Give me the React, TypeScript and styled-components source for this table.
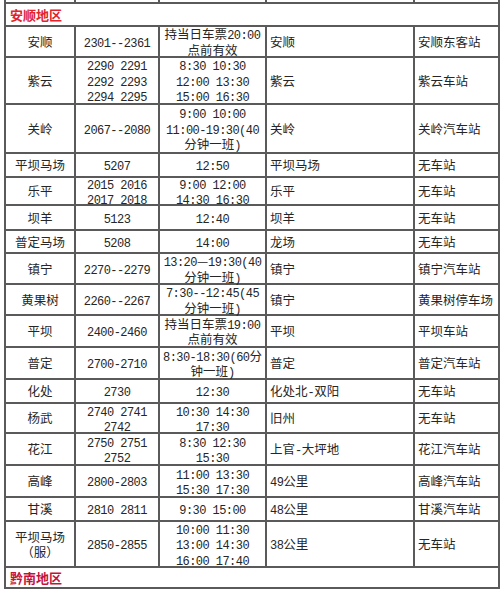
import React from "react";
import styled, { createGlobalStyle } from "styled-components";

type Route = {
  area: string;
  lines: string;
  times: string;
  stop: string;
  station: string;
  h: number;
};

const GlobalStyle = createGlobalStyle`
  html, body {
    margin: 0;
    padding: 0;
    background: #fff;
  }
  body {
    font-family: "Noto Sans CJK SC", sans-serif;
    color: #262626;
  }
`;

const Table = styled.table`
  margin-left: 4px;
  width: 494px;
  table-layout: fixed;
  border-collapse: collapse;
  font-size: 12.5px;
  line-height: 15.5px;
`;

const Row = styled.tr<{ $h: number }>`
  height: ${(p) => p.$h}px;
`;

const Cell = styled.td<{ $left?: boolean }>`
  border: 2px solid #5a5a5a;
  padding: 0 3px;
  text-align: ${(p) => (p.$left ? "left" : "center")};
  vertical-align: middle;
  white-space: nowrap;
  overflow: visible;
`;

// the source rows are tighter than their line spacing, so let text bleed a little
const Lines = styled.div`
  margin: -5px 0;
`;

const StubCell = styled.td`
  border: 2px solid #5a5a5a;
  border-top: none;
  padding: 0;
`;

const SectionCell = styled.td<{ $color: string }>`
  border: 2px solid #5a5a5a;
  padding: 0 4px;
  text-align: left;
  vertical-align: middle;
  font-size: 13px;
  line-height: 15px;
  font-weight: 700;
  color: ${(p) => p.$color};
`;

const Latin = styled.span`
  font-family: "Liberation Mono", monospace;
  font-size: 12px;
  line-height: 10px;
  letter-spacing: -0.55px;
`;

const routes: Route[] = [
  { area: "安顺", lines: "2301--2361", times: "持当日车票20:00\n点前有效", stop: "安顺", station: "安顺东客站", h: 31 },
  { area: "紫云", lines: "2290 2291\n2292 2293\n2294 2295", times: "8:30 10:30\n12:00 13:30\n15:00 16:30", stop: "紫云", station: "紫云车站", h: 47 },
  { area: "关岭", lines: "2067--2080", times: "9:00 10:00\n11:00-19:30(40\n分钟一班)", stop: "关岭", station: "关岭汽车站", h: 49 },
  { area: "平坝马场", lines: "5207", times: "12:50", stop: "平坝马场", station: "无车站", h: 24 },
  { area: "乐平", lines: "2015 2016\n2017 2018", times: "9:00 12:00\n14:30 16:30", stop: "乐平", station: "无车站", h: 28 },
  { area: "坝羊", lines: "5123", times: "12:40", stop: "坝羊", station: "无车站", h: 25 },
  { area: "普定马场", lines: "5208", times: "14:00", stop: "龙场", station: "无车站", h: 23 },
  { area: "镇宁", lines: "2270--2279", times: "13:20—19:30(40\n分钟一班)", stop: "镇宁", station: "镇宁汽车站", h: 31 },
  { area: "黄果树", lines: "2260--2267", times: "7:30--12:45(45\n分钟一班)", stop: "镇宁", station: "黄果树停车场", h: 31 },
  { area: "平坝", lines: "2400-2460", times: "持当日车票19:00\n点前有效", stop: "平坝", station: "平坝车站", h: 32 },
  { area: "普定", lines: "2700-2710", times: "8:30-18:30(60分\n钟一班)", stop: "普定", station: "普定汽车站", h: 32 },
  { area: "化处", lines: "2730", times: "12:30", stop: "化处北-双阳", station: "无车站", h: 24 },
  { area: "杨武", lines: "2740 2741\n2742", times: "10:30 14:30\n17:30", stop: "旧州", station: "无车站", h: 30 },
  { area: "花江", lines: "2750 2751\n2752", times: "8:30 12:30\n15:30", stop: "上官-大坪地", station: "花江汽车站", h: 32 },
  { area: "高峰", lines: "2800-2803", times: "11:00 13:30\n15:30 17:30", stop: "49公里", station: "高峰汽车站", h: 32 },
  { area: "甘溪", lines: "2810 2811", times: "9:30 15:00", stop: "48公里", station: "甘溪汽车站", h: 24 },
  { area: "平坝马场\n（服）", lines: "2850-2855", times: "10:00 11:30\n13:00 14:30\n16:00 17:40", stop: "38公里", station: "无车站", h: 46 },
];

// ascii runs get the narrow mono face, the rest stays CJK
const Text = ({ value }: { value: string }) => (
  <Lines>
    {value.split("\n").map((line, i) => (
      <React.Fragment key={i}>
        {i > 0 && <br />}
        {line.split(/([\x21-\x7e ]+)/).map((part, j) =>
          /^[\x21-\x7e ]+$/.test(part) ? <Latin key={j}>{part}</Latin> : part
        )}
      </React.Fragment>
    ))}
  </Lines>
);

const App = () => (
  <>
    <GlobalStyle />
    <Table>
      <colgroup>
        <col style={{ width: 70 }} />
        <col style={{ width: 84 }} />
        <col style={{ width: 107 }} />
        <col style={{ width: 148 }} />
        <col style={{ width: 85 }} />
      </colgroup>
      <tbody>
        <Row $h={3}>
          <StubCell />
          <StubCell />
          <StubCell />
          <StubCell />
          <StubCell />
        </Row>
        <Row $h={23}>
          <SectionCell colSpan={5} $color="#e0232c">
            安顺地区
          </SectionCell>
        </Row>
        {routes.map((r) => (
          <Row key={r.area + r.lines} $h={r.h}>
            <Cell>
              <Text value={r.area} />
            </Cell>
            <Cell>
              <Text value={r.lines} />
            </Cell>
            <Cell>
              <Text value={r.times} />
            </Cell>
            <Cell $left>
              <Text value={r.stop} />
            </Cell>
            <Cell $left>
              <Text value={r.station} />
            </Cell>
          </Row>
        ))}
        <Row $h={21}>
          <SectionCell colSpan={5} $color="#c3123d">
            黔南地区
          </SectionCell>
        </Row>
      </tbody>
    </Table>
  </>
);

export default App;
